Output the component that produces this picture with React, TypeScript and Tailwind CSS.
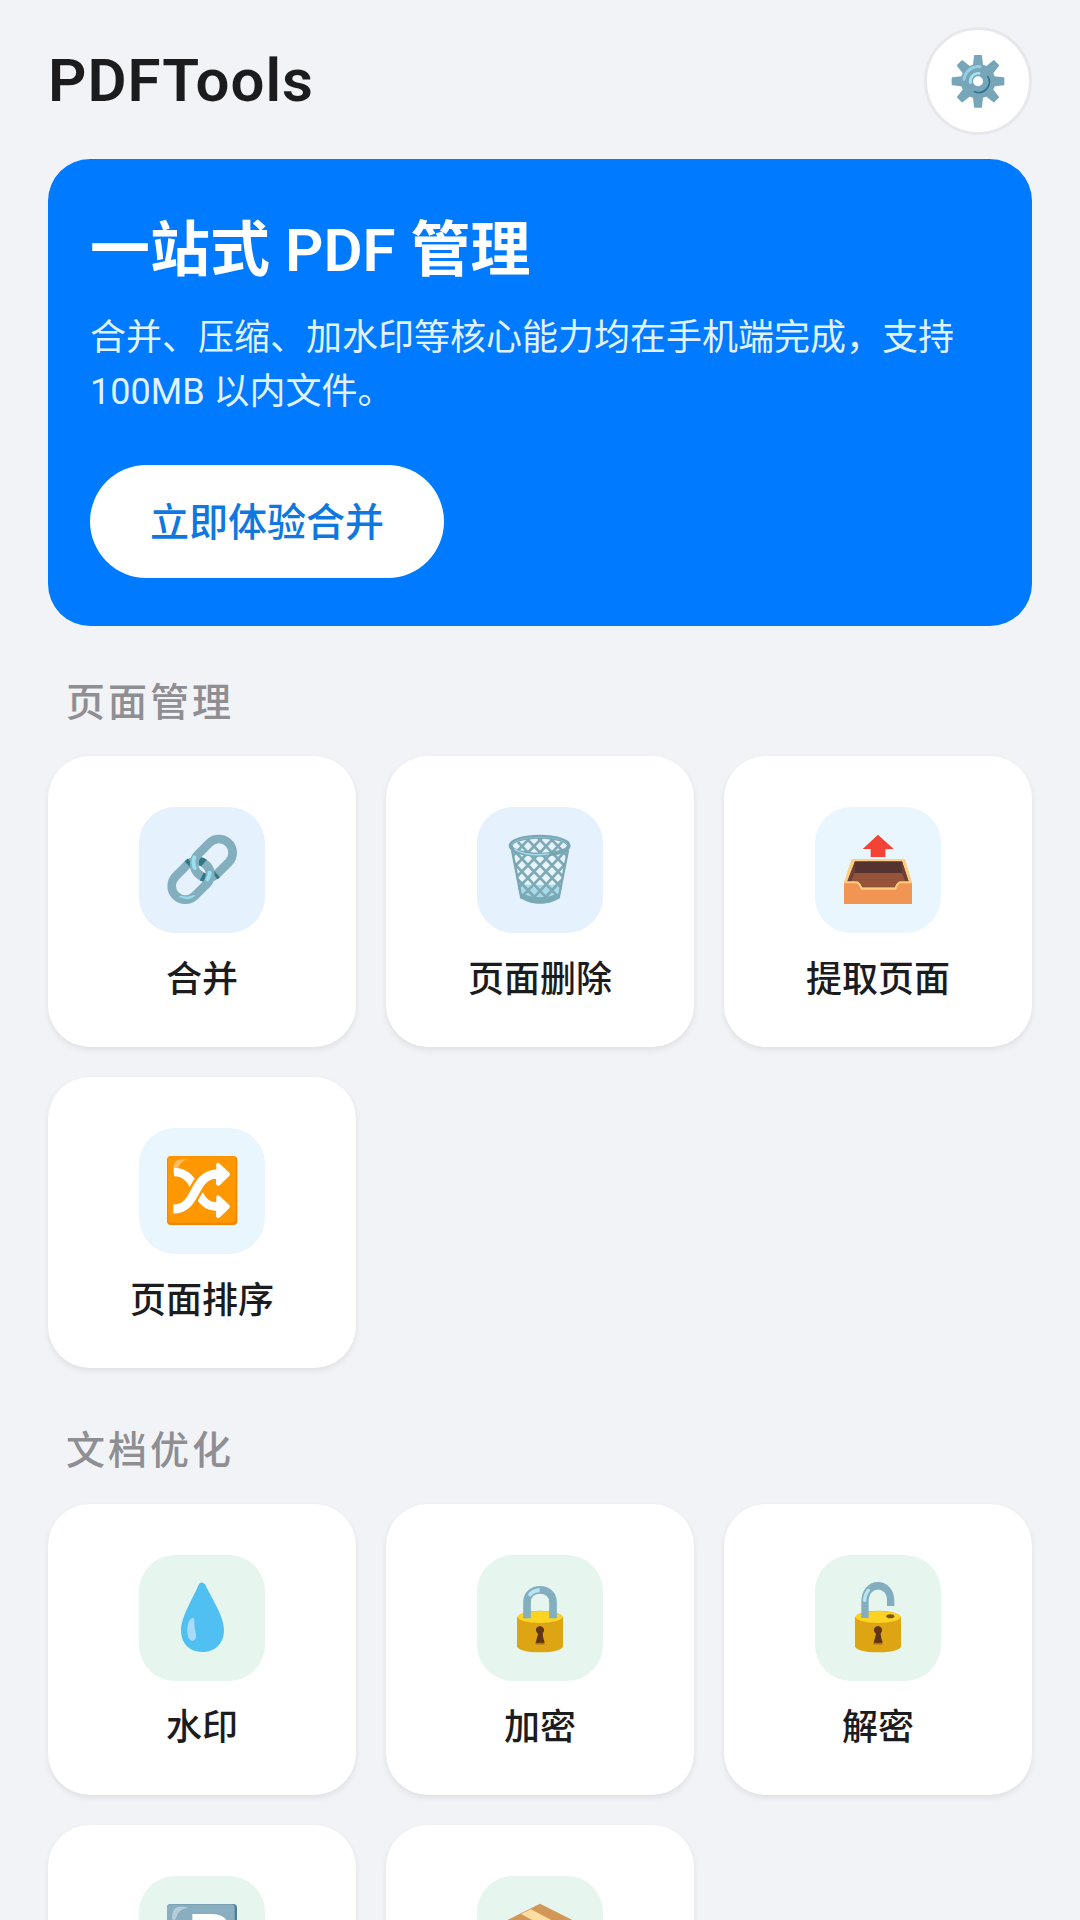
import type { ReactNode } from 'react'

type Tool = {
  id: string
  name: string
  tint: string
  icon: ReactNode
}

type Section = {
  title: string
  tools: Tool[]
}

function GearIcon() {
  return (
    <svg viewBox="153 132 162 162" className="size-[54px]" aria-hidden="true">
      <g fill="#78a6b9">
        {[0, 45, 90, 135, 180, 225, 270, 315].map((angle) => (
          <path key={angle} d="M224 135h20q2 0 2 3l4 35h-32l4-35q0-3 2-3z" transform={`rotate(${angle} 234 214)`} />
        ))}
        <circle cx="234" cy="214" r="52" />
      </g>
      <path d="M192 208a44 44 0 0 1 48-38" fill="none" stroke="#94cfe2" strokeWidth="9" strokeLinecap="round" />
      <path d="M264 200a32 32 0 0 1-40 45" fill="none" stroke="#2d7390" strokeWidth="5" strokeLinecap="round" />
      <path d="M211 218a24 24 0 0 1 26-28" fill="none" stroke="#a2e3f4" strokeWidth="8" strokeLinecap="round" />
      <circle cx="234" cy="214" r="15" fill="#fff" />
    </svg>
  )
}

function LinkIcon() {
  return (
    <svg viewBox="138 132 216 216" className="size-[72px]" aria-hidden="true">
      <g fill="none" stroke="#82aebd" strokeWidth="26">
        <rect x="148" y="230" width="130" height="82" rx="41" transform="rotate(-45 213 271)" />
        <path d="M203 224l9-9M236 214q9-1 16 5" stroke="#2f7886" />
        <rect x="215" y="164" width="130" height="82" rx="41" transform="rotate(-45 280 205)" />
        <path d="M245 260q6 3 12 3M284 258l7-6" stroke="#2f7886" />
        <path d="M258 224a41 41 0 0 1 1 59" />
      </g>
      <path d="M223 202q-6 17 1 32M269 248q0 12-7 20" fill="none" stroke="#99deed" strokeWidth="12" strokeLinecap="round" />
      <path d="M178 319q25 7 47-3-17 18-47 3z" fill="#99deed" stroke="#99deed" strokeWidth="3" />
    </svg>
  )
}

function TrashIcon() {
  return (
    <svg viewBox="132 132 216 216" className="size-[72px]" aria-hidden="true">
      <defs>
        <clipPath id="basket">
          <path d="M154 167q86-52 172 0l-26 158q-60 30-120 0z" />
        </clipPath>
      </defs>
      <path d="M154 174l28 149q58 33 117 0l27-149z" fill="#e6f5fb" />
      <path d="M174 284h133l-9 38q-58 33-117 0z" fill="#a6dce8" />
      <g clipPath="url(#basket)" fill="none" stroke="#7fa9b6" strokeWidth="8">
        <path d="M120 175l155 165M120 137l190 200M135 115l190 200M171 115l175 184M207 115l150 158M243 115l100 105M279 115l90 95M120 212l120 127" />
        <path d="M360 175L205 340M360 137L170 337M345 115L155 315M309 115L134 299M273 115L123 273M237 115L137 220M201 115L111 210M360 212L240 339" />
      </g>
      <path d="M156 180l27 139q57 35 114 0l27-139" fill="none" stroke="#7aa6b4" strokeWidth="7" />
      <path d="M181 308q59 27 119 0l-3 18q-57 31-113 0z" fill="#78a9b5" />
      <ellipse cx="239" cy="167" rx="87" ry="27" fill="none" stroke="#78a6b5" strokeWidth="12" />
      <path d="M155 166q6-23 84-24 75 1 84 22" fill="none" stroke="#91bfcb" strokeWidth="3" />
      <path d="M164 178q34 22 101 14" fill="none" stroke="#a7dce8" strokeWidth="4" strokeLinecap="round" />
    </svg>
  )
}

function OutboxIcon() {
  return (
    <svg viewBox="126 132 216 216" className="size-[72px]" aria-hidden="true">
      <path d="M234 134l47 43h-25v24h-44v-24h-24z" fill="#f44336" />
      <path d="M155 207h160l21 70v20H132v-20z" fill="#ffcc80" />
      <path d="M165 214h141l20 61h-26q-10 1-15 17H187q-8-16-16-17h-28z" fill="#543331" />
      <path d="M157 249h150l13 26h-20q-10 1-15 17H187q-8-16-16-17h-26z" fill="#955438" />
      <path d="M165 214l-24 61h12l12-28zM306 214l20 61h-10l-11-28z" fill="#6d4038" />
      <path d="M132 277h38q8 1 15 18h101q5-17 15-18h35v65H132z" fill="#f19554" />
      <path d="M132 277h38q7 1 15 19h101q7-18 15-19h35" fill="none" stroke="#ffcc80" strokeWidth="6" />
    </svg>
  )
}

function ShuffleIcon() {
  return (
    <svg viewBox="138 135 216 216" className="size-[72px]" aria-hidden="true">
      <rect x="141" y="138" width="211" height="207" rx="12" fill="#ef8500" />
      <rect x="143" y="139" width="204" height="199" rx="10" fill="#ff9800" />
      <path d="M160 191q-3-35 13-40 15-4 31-3-22 5-28 23z" fill="#ffbd63" />
      <path d="M162 186c42 0 56 33 72 62 14 28 29 42 58 42" fill="none" stroke="#fff" strokeWidth="26" />
      <path d="M289 260q2-8 10-2l29 27q4 5 0 9l-28 28q-9 6-12-3z" fill="#fff" />
      <path d="M162 297c40 0 52-34 70-64 14-26 28-41 58-41" fill="none" stroke="#ff9800" strokeWidth="42" />
      <path d="M160 297c44 0 54-34 72-64 14-26 30-41 60-41" fill="none" stroke="#fff" strokeWidth="27" />
      <path d="M289 163q2-8 10-2l29 27q4 5 0 9l-28 28q-9 6-12-3z" fill="#fff" />
    </svg>
  )
}

function DropIcon() {
  return (
    <svg viewBox="138 126 216 216" className="size-[72px]" aria-hidden="true">
      <path d="M237 132q9-9 18 1c18 38 57 96 57 137 0 42-28 66-65 66s-64-24-64-65c0-42 40-103 54-139z" fill="#50bff2" />
      <path d="M202 266q2-30 17-33 5 2 4 18 0 13 5 31 2 23-14 20-13-7-12-36z" fill="#a9dcf8" />
    </svg>
  )
}

function LockIcon() {
  return (
    <svg viewBox="132 126 216 216" className="size-[72px]" aria-hidden="true">
      <path d="M171 233q8-20 69-21 63 1 69 21v87q-8 16-69 17-61-1-69-17z" fill="#dda414" />
      <ellipse cx="240" cy="231" rx="67" ry="18" fill="#fdd323" />
      <path d="M201 235v-48c0-50 78-50 78 0v48" fill="none" stroke="#82aebf" strokeWidth="23" />
      <path d="M203 164q10-18 36-20v13q-19 0-28 14z" fill="#b9e4f1" />
      <path d="M229 275a12 12 0 1 1 20 3q-3 5 5 29 0 4-27 3 0-3 7-28z" fill="#603516" />
      <path d="M227 311h26" stroke="#a77413" strokeWidth="5" />
    </svg>
  )
}

function UnlockIcon() {
  return (
    <svg viewBox="126 126 216 216" className="size-[72px]" aria-hidden="true">
      <path d="M165 233q8-20 69-21 63 1 69 21v87q-8 16-69 17-61-1-69-17z" fill="#dda414" />
      <ellipse cx="234" cy="231" rx="67" ry="18" fill="#fdd323" />
      <ellipse cx="271" cy="229" rx="12" ry="6" fill="#805414" />
      <path d="M195 234v-50c0-62 77-62 77-2v16" fill="none" stroke="#82aebf" strokeWidth="22" />
      <path d="M194 181q1-19 11-30" fill="none" stroke="#b9e4f1" strokeWidth="10" strokeLinecap="round" />
      <path d="M223 275a12 12 0 1 1 20 3q-3 5 5 29 0 4-27 3 0-3 7-28z" fill="#603516" />
      <path d="M221 311h26" stroke="#a77413" strokeWidth="5" />
    </svg>
  )
}

function ParkingIcon() {
  return (
    <svg viewBox="408 369 216 216" className="size-[72px]" aria-hidden="true">
      <rect x="411" y="372" width="210" height="207" rx="12" fill="#4e7e94" />
      <rect x="411" y="373" width="203" height="200" rx="10" fill="#89aebf" />
      <path d="M426 414q0-33 22-34 15-2 27 4-28 2-35 25-10 25-14 5z" fill="#b4cdd8" />
      <text x="474" y="550" fontSize="208" fontWeight="700" fontFamily="Roboto, sans-serif" fill="#fff">P</text>
    </svg>
  )
}

function PackageIcon() {
  return (
    <svg viewBox="402 369 216 216" className="size-[72px]" aria-hidden="true">
      <path d="M510 371l103 52-103 53-103-53z" fill="#d29657" />
      <path d="M407 423l103 53v104l-103-52z" fill="#b77b42" />
      <path d="M613 423l-103 53v104l103-52z" fill="#c98c4c" />
      <path d="M453 402l30-14 99 52-30 15z" fill="#ffdda0" />
    </svg>
  )
}

const sections: Section[] = [
  {
    title: '页面管理',
    tools: [
      { id: 'merge', name: '合并', tint: 'bg-[#e6f1fe]', icon: <LinkIcon /> },
      { id: 'delete', name: '页面删除', tint: 'bg-[#e6f1fe]', icon: <TrashIcon /> },
      { id: 'extract', name: '提取页面', tint: 'bg-[#e9f6fd]', icon: <OutboxIcon /> },
      { id: 'sort', name: '页面排序', tint: 'bg-[#e9f6fd]', icon: <ShuffleIcon /> },
    ],
  },
  {
    title: '文档优化',
    tools: [
      { id: 'watermark', name: '水印', tint: 'bg-[#e6f6ee]', icon: <DropIcon /> },
      { id: 'encrypt', name: '加密', tint: 'bg-[#e6f6ee]', icon: <LockIcon /> },
      { id: 'decrypt', name: '解密', tint: 'bg-[#e6f6ee]', icon: <UnlockIcon /> },
      { id: 'number', name: '页码', tint: 'bg-[#e6f6ee]', icon: <ParkingIcon /> },
      { id: 'compress', name: '压缩', tint: 'bg-[#e6f6ee]', icon: <PackageIcon /> },
    ],
  },
]

function ToolCard({ tool }: { tool: Tool }) {
  return (
    <button
      type="button"
      className="flex flex-col items-center rounded-[42px] bg-white pt-[51px] pb-10 shadow-[0_3px_6px_rgba(0,0,0,0.08)]"
    >
      <span className={`flex size-[126px] items-center justify-center rounded-[36px] ${tool.tint}`}>{tool.icon}</span>
      <span className="mt-5 text-[36px] leading-[54px] font-medium text-[#1c1c1e]">{tool.name}</span>
    </button>
  )
}

export default function App() {
  return (
    <main className="min-h-screen bg-[#f2f3f7] px-12 pt-[27px] pb-12 font-['Roboto','Noto_Sans_CJK_SC',sans-serif]">
      <header className="mb-6 flex items-center justify-between">
        <h1 className="text-[60px] leading-[84px] font-semibold tracking-[1px] text-[#1c1c1e]">PDFTools</h1>
        <button
          type="button"
          aria-label="设置"
          className="flex size-[108px] items-center justify-center rounded-full border-3 border-[#e8e8ec] bg-white"
        >
          <GearIcon />
        </button>
      </header>

      <section className="mb-[50px] rounded-[42px] bg-[#007aff] px-[42px] pt-[50px] pb-12">
        <h2 className="text-[60px] leading-[84px] font-semibold text-white">一站式 PDF 管理</h2>
        <p className="mt-[18px] text-[36px] leading-[54px] text-[#e0f2ff]">
          合并、压缩、加水印等核心能力均在手机端完成，支持 100MB 以内文件。
        </p>
        <button
          type="button"
          className="mt-[46px] h-[113px] rounded-full bg-white px-[60px] pt-1 text-[39px] font-medium text-[#0f78e0]"
        >
          立即体验合并
        </button>
      </section>

      {sections.map((section) => (
        <section key={section.title} className="mb-14">
          <h3 className="mb-[26px] pl-[18px] text-[39px] leading-[54px] font-medium tracking-[3px] text-[#8e8e93]">
            {section.title}
          </h3>
          <div className="grid grid-cols-3 gap-[30px]">
            {section.tools.map((tool) => (
              <ToolCard key={tool.id} tool={tool} />
            ))}
          </div>
        </section>
      ))}
    </main>
  )
}
